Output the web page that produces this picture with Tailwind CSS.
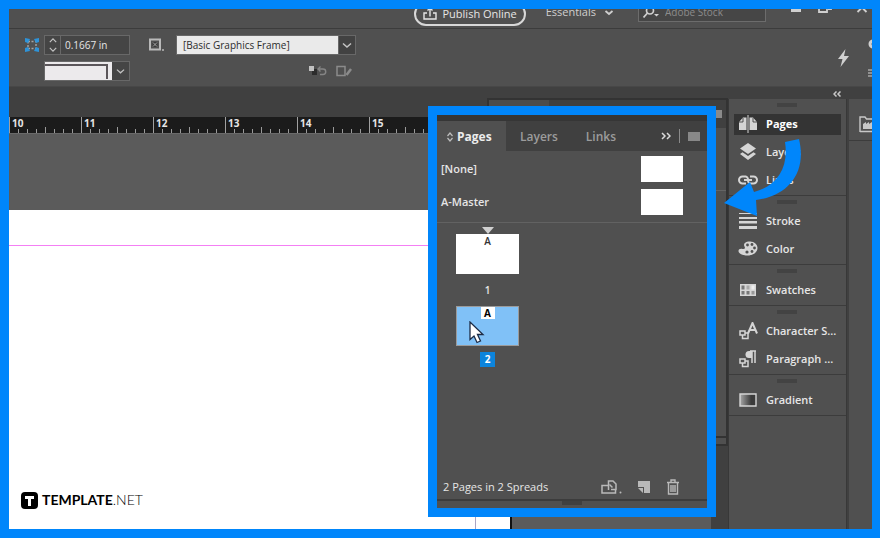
<!DOCTYPE html>
<html lang="en">
<head>
  <meta charset="UTF-8">
  <meta name="viewport" content="width=device-width, initial-scale=1">
  <title>Pages panel</title>
  <script src="https://cdn.jsdelivr.net/npm/@tailwindcss/browser@4"></script>
</head>
<body class="relative h-screen overflow-hidden flex flex-col bg-[#505050] text-[#e6e6e6] text-[11px] leading-4 font-['Open_Sans','Noto_Sans',sans-serif]">

  <!-- Application bar -->
  <header class="h-[29px] shrink-0 flex items-center justify-end pr-3 border-b border-[#3c3c3c]">
    <button class="h-6 w-28 mr-5 flex items-center justify-center gap-1.5 border-2 border-[#d8d8d8] rounded-full font-medium">
      <svg class="w-3.5 h-3.5" viewBox="0 0 14 14" fill="none" stroke="currentColor" stroke-width="1.4">
        <path d="M4 6H1v6h12V6h-3M7 9.5V1.5M4.500 3.500L7 1l2.500 2.500" />
      </svg>
      Publish Online
    </button>
    <button class="flex items-center gap-2 mr-6 pb-1 text-[#cfcfcf] font-medium">
      Essentials
      <svg class="w-2.5 h-2.5" viewBox="0 0 10 10" fill="none" stroke="currentColor" stroke-width="1.8"><path d="M1.5 4L5 7l3.5-3" /></svg>
    </button>
    <label class="h-[19px] w-32 flex items-center gap-1.5 px-1 mb-1 bg-[#464646] border border-[#6c6c6c]">
      <svg class="w-4 h-3 shrink-0 text-[#d0d0d0]" viewBox="0 0 16 12" fill="none" stroke="currentColor" stroke-width="1.7">
        <circle cx="7" cy="4.5" r="3.5" /><path d="M4.5 7L0.5 11.5" /><path d="M11 8h5l-2.5 2.5z" fill="currentColor" stroke="none" />
      </svg>
      <span class="sr-only">Search Adobe Stock</span>
      <input type="text" placeholder="Adobe Stock" class="w-full min-w-0 text-[10px] bg-transparent outline-none placeholder:text-[#8c8c8c]">
    </label>
    <div class="flex items-center gap-4 ml-6 pb-3.5 text-[#d0d0d0]">
      <button aria-label="Minimize" class="w-3 h-3"><svg viewBox="0 0 12 12"><path d="M1 8h10v3H1z" fill="currentColor" /></svg></button>
      <button aria-label="Restore" class="w-3.5 h-3"><svg viewBox="0 0 14 12" fill="none" stroke="currentColor" stroke-width="1.8"><path d="M1 4h8v7H1zM5 3V1h8v7h-3" /></svg></button>
      <button aria-label="Close" class="w-3 h-3 ml-2"><svg viewBox="0 0 12 12" fill="none" stroke="currentColor" stroke-width="1.8"><path d="M1.5 2l9 9M10.500 2l-9 9" /></svg></button>
    </div>
  </header>

  <!-- Control bar -->
  <section class="h-[58px] shrink-0 flex items-center pl-6 border-b border-[#474747]">
    <div class="flex flex-col gap-1.5">
      <div class="flex items-center h-5">
        <svg class="w-4 h-4" viewBox="0 0 16 16">
          <path d="M4 4.5h8v7H4z" fill="none" stroke="#a5a5a5" stroke-width="1.4" stroke-dasharray="2 1.5" />
          <path d="M1 1l5 1-2 4-3-1zM15 1l-5 1 2 4 3-1zM1 15l5-1-2-4-3 1zM15 15l-5-1 2-4 3 1z" fill="#2e93d8" />
        </svg>
        <div class="flex ml-1 h-5 border border-[#686868] bg-[#454545]">
          <div class="w-4 flex flex-col items-center justify-center gap-1 border-r border-[#686868]">
            <button aria-label="Increase" class="block"><svg class="w-2 h-[5px]" viewBox="0 0 10 6" fill="none" stroke="#c4c4c4" stroke-width="1.5"><path d="M1 5l4-4 4 4" /></svg></button>
            <button aria-label="Decrease" class="block"><svg class="w-2 h-[5px]" viewBox="0 0 10 6" fill="none" stroke="#c4c4c4" stroke-width="1.5"><path d="M1 1l4 4 4-4" /></svg></button>
          </div>
          <input type="text" aria-label="Corner size" value="0.1667 in" class="w-[68px] px-1 outline-none text-[10px] font-medium">
        </div>
      </div>
      <button aria-label="Corner shape" class="ml-5 h-5 flex border border-[#686868] bg-[#454545]">
        <span class="w-[67px] h-full pt-0.5 pr-1 bg-[#eceaec]">
          <span class="block h-[15px] border-t-2 border-r-2 border-[#5b565a]"></span>
        </span>
        <svg class="w-[17px] h-full p-1" viewBox="0 0 10 10" fill="none" stroke="#c4c4c4" stroke-width="1.4"><path d="M1 3.5L5 7l4-3.5" /></svg>
      </button>
    </div>

    <div class="flex flex-col gap-1.5 ml-[18px]">
      <div class="flex items-center h-5">
        <svg class="w-4 h-4" viewBox="0 0 16 16">
          <path d="M2 2.5h10v10H2z" fill="none" stroke="#b9b9b9" stroke-width="2" />
          <path d="M4.5 5h5v5h-5z" fill="#3a3a3a" />
          <path d="M5 5.5l4 4M9 5.5l-4 4" stroke="#a5a5a5" />
          <circle cx="15" cy="13" r="1" fill="#b9b9b9" />
        </svg>
        <div class="relative ml-3 flex">
          <select aria-label="Object style" class="appearance-none w-[180px] h-5 pl-1.5 pr-5 bg-[#eaeaea] text-[#2c2c2c] text-[10px] font-medium border border-[#686868] outline-none">
            <option>[Basic Graphics Frame]</option>
            <option>[None]</option>
          </select>
          <span class="absolute inset-y-0 right-0 w-[18px] flex items-center justify-center bg-[#424242] border border-[#686868] pointer-events-none">
            <svg class="w-2.5 h-2.5" viewBox="0 0 10 10" fill="none" stroke="#c4c4c4" stroke-width="1.5"><path d="M1 3.5L5 7l4-3.5" /></svg>
          </span>
        </div>
      </div>
      <div class="h-5 flex items-center justify-end gap-2 pr-[3px]">
        <svg class="w-5 h-3" viewBox="0 0 20 12">
          <path d="M5 4h5v6H5z" fill="#2c2c2c" /><path d="M2 1h5v5H2z" fill="#c2c2c2" />
          <path d="M11 4h5a2.500 2.500 0 010 5.500H13M13.500 1.500L11 4l2.500 2.500" fill="none" stroke="#858585" stroke-width="1.4" />
        </svg>
        <svg class="w-4.5 h-3" viewBox="0 0 18 12" fill="none" stroke="#8b8b8b" stroke-width="1.5">
          <path d="M2 1.5h8v9H2z" /><path d="M11.5 10l4.500-6" stroke-width="2.5" />
        </svg>
      </div>
    </div>

    <div class="ml-auto flex items-center gap-[18px] text-[#d0d0d0]">
      <svg class="w-3.5 h-[18px]" viewBox="0 0 14 18"><path d="M9.5 0L2 10h4.500L4.500 18 13 7H8z" fill="currentColor" /></svg>
      <div class="w-3 flex flex-col gap-5">
        <svg class="w-3 h-2.5" viewBox="0 0 12 10"><circle cx="5" cy="5" r="3" fill="none" stroke="currentColor" stroke-width="3" /></svg>
        <svg class="w-3 h-2" viewBox="0 0 12 8"><path d="M0 1h12M0 4h12M0 7h12" stroke="currentColor" stroke-width="1.2" /></svg>
      </div>
    </div>
  </section>

  <main class="relative flex-1 min-h-0 flex bg-[#404040]">
    <!-- Document window -->
    <div class="flex-1 min-w-0 flex flex-col">
      <div class="h-[30px] shrink-0"></div>
      <div id="ruler" class="h-4 shrink-0 flex overflow-hidden pl-[9px] bg-[#1b1b1b]"></div>
      <div class="flex-1 min-h-0 pt-[76px] bg-[#5b5b5b] border-t border-[#6a6a6a]">
        <div class="h-full w-[512px] flex flex-col bg-white border-r-2 border-[#111]">
          <div class="h-9 shrink-0 border-b border-[#f47ff4]"></div>
          <div class="flex-1 mr-[34px] border-r border-[#a9a4c4]">
            <div class="flex items-center gap-1 pl-[21px] pt-[244px] text-black text-[14px] leading-5 font-[Lato,sans-serif]">
              <svg class="w-[17px] h-[17px]" viewBox="0 0 17 17"><rect width="17" height="17" rx="4" /><path d="M4 4h9v3h-3v7H7V7H4z" fill="#fff" /></svg>
              <span><b class="font-bold">TEMPLATE</b><span class="font-light">.NET</span></span>
            </div>
          </div>
        </div>
      </div>
    </div>
    <div class="w-[17px]"></div>

    <!-- Docked panel group, sits over the document -->
    <div class="absolute top-[11px] right-[152px] w-[241px] h-[348px] flex flex-col bg-[#505050] border-2 border-[#333]">
      <div class="h-7 flex items-center justify-end pr-1 bg-[#404040]">
        <span class="h-full w-[60px] mr-auto bg-[#4c4c4c]"></span>
        <span class="w-2.5 h-2 bg-[#8a8a8a]"></span>
      </div>
      <div class="h-[63px] border-b border-[#646464]"></div>
      <div class="mt-auto h-2 border-t-2 border-[#333]"></div>
    </div>

    <!-- Icon dock -->
    <nav class="w-[119px] pt-3 flex flex-col">
      <div class="flex-1 bg-[#505050] border-x border-[#383838]">
        <div class="pt-[11px] pb-px px-[5px] border-b border-[#3c3c3c] relative">
          <span class="absolute top-1 left-12 w-5 h-1 bg-[#434343]"></span>
          <button class="h-7 w-full flex items-center"><span class="h-[21px] w-full flex items-center gap-2 pl-1 bg-[#343434] font-bold text-white">
            <svg class="w-5 h-4.5 text-[#d5d5d5]" viewBox="0 0 20 18"><path d="M1 7l4-4.500h3.500V15H1zM19 7l-4-4.500h-3.500V15H19z" fill="currentColor" /><path d="M10 0v18" stroke="currentColor" /><path d="M5 3v4H1M15 3v4h4" fill="none" stroke="#343434" stroke-width="0.8" /></svg>
            Pages</span></button>
          <button class="h-7 w-full flex items-center gap-2 pl-1 font-semibold">
            <svg class="w-5 h-4.5 text-[#d5d5d5]" viewBox="0 0 20 18"><path d="M10 0l8 5.500-8 5.500-8-5.500z" fill="currentColor" /><path d="M2 11l2.500-1.800L10 13l5.500-3.800L18 11l-8 6z" fill="currentColor" /></svg>
            Layers</button>
          <button class="h-7 w-full flex items-center gap-2 pl-1 font-semibold">
            <svg class="w-5 h-4.5 text-[#d5d5d5]" viewBox="0 0 20 18" fill="none" stroke="currentColor" stroke-width="2"><path d="M8 12.500H4.500a3.500 3.500 0 010-7h3A3 3 0 0110 9M12 5.500h3.500a3.500 3.500 0 010 7h-3A3 3 0 0110 9M6 9h8" /></svg>
            Links</button>
        </div>
        <div class="pt-[11px] pb-px px-[5px] border-b border-[#3c3c3c] relative">
          <span class="absolute top-1 left-12 w-5 h-1 bg-[#434343]"></span>
          <button class="h-7 w-full flex items-center gap-2 pl-1 font-semibold">
            <svg class="w-5 h-4.5 text-[#d5d5d5]" viewBox="0 0 20 18"><path d="M1 1h18v1H1zM1 5h18v2H1zM1 9h18v2.500H1zM1 14h18v3H1z" fill="currentColor" /></svg>
            Stroke</button>
          <button class="h-7 w-full flex items-center gap-2 pl-1 font-semibold">
            <svg class="w-5 h-4.5 text-[#d5d5d5]" viewBox="0 0 20 18"><path d="M12 1.500c4.500 0 7.500 3 7.500 6.500 0 4.500-4.500 7.500-10 7.500-5 0-9-2-9-4.500 0-2 2-2.500 4-2 2.500.5 3-1 2-2.500C5 3.500 7.500 1.500 12 1.500z" fill="currentColor" /><g fill="#505050"><circle cx="9.500" cy="5" r="1.400" /><circle cx="14" cy="4.500" r="1.400" /><circle cx="16.500" cy="8" r="1.400" /><circle cx="14" cy="11.500" r="1.400" /><circle cx="9" cy="12" r="1.600" /></g></svg>
            Color</button>
        </div>
        <div class="pt-[11px] pb-px px-[5px] border-b border-[#3c3c3c] relative">
          <span class="absolute top-1 left-12 w-5 h-1 bg-[#434343]"></span>
          <button class="h-7 w-full flex items-center gap-2 pl-1 font-semibold">
            <svg class="w-5 h-4.5 text-[#d5d5d5]" viewBox="0 0 20 18"><path d="M2 3h16v12H2z" fill="currentColor" /><path d="M3.500 4.500h3v4h-3zM3.500 10h3v3.500h-3zM8.500 10h3v3.500h-3z" fill="#777" /><path d="M8.500 4.500h3v4h-3z" fill="#a8a8a8" /><path d="M13.500 4.500h3v4h-3z" fill="#eee" /><path d="M13.500 10h3v3.500h-3z" fill="#999" /></svg>
            Swatches</button>
        </div>
        <div class="pt-[11px] pb-px px-[5px] border-b border-[#3c3c3c] relative">
          <span class="absolute top-1 left-12 w-5 h-1 bg-[#434343]"></span>
          <button class="h-7 w-full flex items-center gap-2 pl-1 font-semibold whitespace-nowrap">
            <svg class="w-5 h-4.5 shrink-0 text-[#d5d5d5]" viewBox="0 0 20 18" fill="none" stroke="currentColor" stroke-width="1.5"><path d="M10 11.500L14.500 1l4.500 10.500M11.500 8h6" stroke-width="2" /><path d="M2 9h5v4H2zM4.500 13v3.500h5.500V11H7" /></svg>
            Character S...</button>
          <button class="h-7 w-full flex items-center gap-2 pl-1 font-semibold whitespace-nowrap">
            <svg class="w-5 h-4.5 shrink-0 text-[#d5d5d5]" viewBox="0 0 20 18" fill="none" stroke="currentColor" stroke-width="1.5"><path d="M14 1v12M17 1v12M12 1h6" /><path d="M14 1h-3a3.500 3.500 0 000 7h3z" fill="currentColor" stroke="none" /><path d="M2 9h5v4H2zM4.500 13v3.500h5.500V11H7" /></svg>
            Paragraph ...</button>
        </div>
        <div class="pt-[11px] pb-px px-[5px] border-b border-[#3c3c3c] relative">
          <span class="absolute top-1 left-12 w-5 h-1 bg-[#434343]"></span>
          <button class="h-7 w-full flex items-center gap-2 pl-1 font-semibold">
            <svg class="w-5 h-4.5" viewBox="0 0 20 18"><defs><linearGradient id="grad"><stop stop-color="#a8a8a8" /><stop offset=".7" stop-color="#3b3b3b" /></linearGradient></defs><path d="M2 3h16v12H2z" fill="url(#grad)" stroke="#d5d5d5" stroke-width="1.4" /></svg>
            Gradient</button>
        </div>
      </div>
    </nav>
    <svg class="absolute top-1 right-[39px] w-2 h-1.5" viewBox="0 0 8 6" fill="none" stroke="#c8c8c8" stroke-width="1.5"><path d="M3.500 0.500L1 3l2.500 2.500M7.500 0.500L5 3l2.500 2.500" /></svg>

    <div class="w-[33px] pt-3 pl-0.5 flex flex-col">
      <div class="h-[42px] pt-4 pl-2.5 bg-[#505050] border-b border-[#3c3c3c]">
        <svg class="w-5 h-4.5" viewBox="0 0 20 18"><path d="M1 17V2h5l1.500 2H20M1 16.500h19" fill="none" stroke="#c8c8c8" stroke-width="1.4" /><path d="M4 14V9l3-2v2l3-2v2l3-2v7z" fill="#c8c8c8" /></svg>
      </div>
      <div class="flex-1 bg-[#505050]"></div>
    </div>
  </main>

  <!-- Highlighted Pages panel -->
  <section class="absolute top-[106px] right-[164px] w-[288px] h-[411px] flex flex-col bg-[#505050] border-[9px] border-[#0086fb]">
    <div class="h-1.5 shrink-0 bg-[#363636]"></div>
    <div class="h-[30px] shrink-0 flex items-center bg-[#404040] text-xs font-semibold text-[#9c9c9c]">
      <button class="h-full w-[69px] flex items-center gap-1 pl-2.5 pt-0.5 bg-[#505050] text-[#ececec] font-bold">
        <svg class="w-1.5 h-2.5" viewBox="0 0 6 10" fill="none" stroke="#bdbdbd" stroke-width="1.2"><path d="M0.500 4L3 1l2.500 3M0.500 6L3 9l2.500-3" /></svg>
        Pages
      </button>
      <button class="ml-3.5 pt-0.5">Layers</button>
      <button class="ml-7 pt-0.5">Links</button>
      <div class="ml-auto flex items-center gap-2 pr-[7px]">
        <svg class="w-2.5 h-2" viewBox="0 0 10 8" fill="none" stroke="#dadada" stroke-width="1.5"><path d="M1 1l3 3-3 3M6 1l3 3-3 3" /></svg>
        <span class="h-3.5 border-l border-[#8a8a8a]"></span>
        <button aria-label="Panel menu" class="w-3 h-[9px] bg-[#888]"></button>
      </div>
    </div>

    <div class="pt-px pb-1 border-b border-[#626262] font-semibold">
      <div class="h-[33px] flex items-center justify-between pl-1 pr-6">[None]<span class="w-[42px] h-[26px] bg-white"></span></div>
      <div class="h-[33px] flex items-center justify-between pl-1 pr-6">A-Master<span class="w-[42px] h-[26px] bg-white"></span></div>
    </div>

    <div class="flex-1 min-h-0 pt-[3px] pl-[19px]">
      <div class="w-[63px] flex flex-col items-center font-semibold text-[10px]">
        <svg class="w-3 h-2" viewBox="0 0 12 8"><path d="M0 1h12L6 8z" fill="#d0d0d0" /></svg>
        <div class="w-full h-10 bg-white text-[#333] text-center leading-[14px]">A</div>
        <span class="h-8 flex items-center">1</span>
        <div class="relative w-full h-10 bg-[#80c1f7] border border-[#9b9b9b] text-center">
          <span class="block mx-auto w-3.5 h-3 bg-white text-black font-bold leading-3">A</span>
          <svg class="absolute left-3 top-3.5 w-4 h-[23px]" viewBox="0 0 16 23"><path d="M1 1v17.500l4-3.500 3 6.500 3.500-1.500-3-6.500H14z" fill="#fff" stroke="#1d2c46" stroke-width="1.3" /></svg>
        </div>
        <span class="mt-1.5 w-[15px] h-[15px] bg-[#0c84dc] text-white text-center font-bold leading-[15px]">2</span>
      </div>
    </div>

    <div class="h-6 shrink-0 flex items-center pl-1.5 pr-[27px] font-medium">
      2 Pages in 2 Spreads
      <div class="ml-auto flex items-center gap-4 text-[#b9b9b9]">
        <button aria-label="Edit page size"><svg class="w-[21px] h-3.5" viewBox="0 0 21 14" fill="none" stroke="currentColor" stroke-width="1.5"><path d="M7 5.500H1V13h13.500V9.500M7.500 10V1H12l3 3v5.500H10" /><path d="M8.500 4.500l3 3" /><circle cx="19.500" cy="12.500" r="1" fill="currentColor" stroke="none" /></svg></button>
        <button aria-label="New page"><svg class="w-3 h-3.5" viewBox="0 0 12 14"><path d="M0 1h12v12H6V7H0zM0 8h5v5z" fill="currentColor" /></svg></button>
        <button aria-label="Delete page"><svg class="w-3.5 h-4" viewBox="0 0 14 16" fill="none" stroke="currentColor" stroke-width="1.4"><path d="M1 3.500h12M5 3V1h4v2M2.500 4v11h9V4M5 6v7M7 6v7M9 6v7" /></svg></button>
      </div>
    </div>
    <div class="h-[9px] shrink-0 border-t-2 border-[#3c3c3c]"><div class="mx-auto w-5 h-1 bg-[#404040]"></div></div>
  </section>

  <!-- Arrow from dock to panel -->
  <svg class="absolute top-[138px] right-[76px] w-20 h-20 pointer-events-none" viewBox="0 0 80 80">
    <path d="M61 4L75 1C83 34 65 58 32 62L33 78 0 65 26 44 30 54C53 48 65 30 61 4z" fill="#0086fb" />
  </svg>

  <!-- Outer frame -->
  <div class="absolute inset-0 border-[9px] border-r-8 border-[#0086fb] pointer-events-none"></div>

  <script>
    const ruler = document.getElementById("ruler");
    // eighth-inch marks, taller at the half inch
    const ticks = ["h-1", "h-1", "h-1", "h-1.5", "h-1", "h-1", "h-1"];

    for (let inch = 10; inch <= 15; inch++) {
      const cell = document.createElement("div");
      cell.className = "relative w-[72px] shrink-0 border-l border-[#a0a0a0] flex items-end justify-evenly";
      cell.innerHTML = `<span class="absolute left-0.5 top-0 text-[10px] leading-3 font-bold">${inch}</span>` +
        ticks.map((h) => `<i class="w-px bg-[#9a9a9a] ${h}"></i>`).join("");
      ruler.appendChild(cell);
    }
  </script>
</body>
</html>
